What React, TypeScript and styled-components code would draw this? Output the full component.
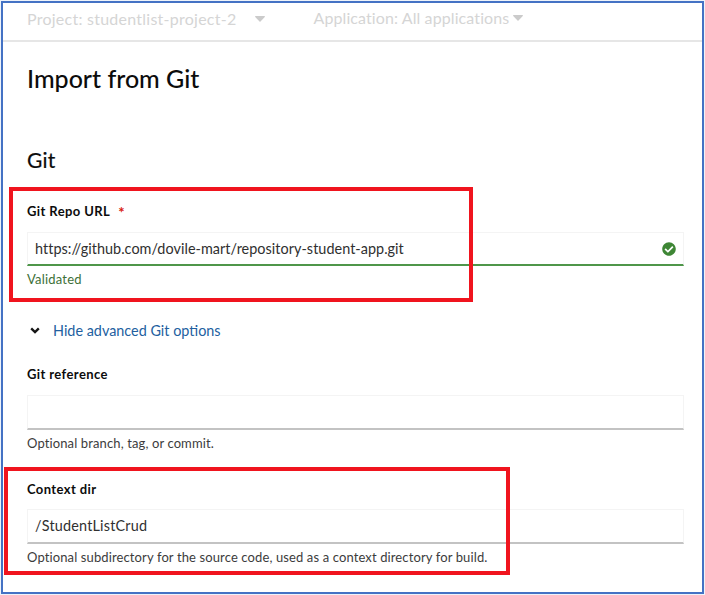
import React from 'react';
import styled, { createGlobalStyle } from 'styled-components';

const GlobalStyle = createGlobalStyle`
  * { box-sizing: border-box; }
  body { margin: 0; background: #fff; font-family: Lato, sans-serif; color: #0c0c0c; }
`;

const Page = styled.div`
  position: relative;
  width: 705px;
  height: 595px;
  padding: 1px;
  overflow: hidden;
  background: #eef3fa;
`;

const Frame = styled.div`
  width: 703px;
  height: 593px;
  border: 2px solid #4472c4;
  background: #fff;
`;

const Toolbar = styled.header`
  display: flex;
  align-items: flex-start;
  height: 39px;
  padding: 5px 24px 0;
  border-bottom: 2px solid #e6e6e6;
`;

const Selector = styled.div<{ $spacing: number; $gap: number; $height: number }>`
  display: flex;
  align-items: center;
  gap: ${(p) => p.$gap}px;
  height: ${(p) => p.$height}px;
  color: #d5d5d5;
  font-size: 16px;
  line-height: ${(p) => p.$height}px;
  letter-spacing: ${(p) => p.$spacing}px;
  white-space: nowrap;

  & + & { margin-left: 48px; }
`;

const Caret = styled.svg`
  display: block;
  width: 10px;
  height: 6px;
  fill: #cbcbcb;
`;

const Content = styled.main`
  display: flex;
  flex-direction: column;
  width: 681px;
  padding-left: 24px;
`;

const Title = styled.h1`
  margin: 19px 0 0;
  font-size: 25px;
  font-weight: 500;
  line-height: 34px;
`;

const SectionTitle = styled.h2`
  margin: 51px 0 28px;
  font-size: 21px;
  font-weight: 400;
  line-height: 28px;
  letter-spacing: 0.2px;
  -webkit-text-stroke: 0.2px #0c0c0c;
`;

const Field = styled.div<{ $top?: number }>`
  display: flex;
  flex-direction: column;
  margin-top: ${(p) => p.$top ?? 0}px;
`;

const Label = styled.label<{ $gap?: number }>`
  display: flex;
  height: 18px;
  margin-bottom: ${(p) => p.$gap ?? 12}px;
  font-size: 13px;
  font-weight: 700;
  line-height: 18px;
  letter-spacing: 0.4px;
`;

const Required = styled.span`
  margin-left: 8px;
  color: #d8200f;
  font-size: 15px;
  line-height: 20px;
`;

const InputBox = styled.div<{ $valid?: boolean }>`
  display: flex;
  align-items: center;
  justify-content: space-between;
  height: ${(p) => (p.$valid ? 34 : 35)}px;
  padding: 0 7px 0 7px;
  border: 1px solid #f4f4f4;
  border-bottom: 2px solid ${(p) => (p.$valid ? '#4f964a' : '#c3c3c3')};
`;

const Value = styled.span<{ $spacing: number }>`
  color: #303030;
  font-size: 14.4px;
  line-height: 20px;
  letter-spacing: ${(p) => p.$spacing}px;
`;

const Help = styled.div<{ $valid?: boolean; $top: number }>`
  margin-top: ${(p) => p.$top}px;
  color: ${(p) => (p.$valid ? '#3d7038' : '#3c3c3c')};
  font-size: 13px;
  line-height: 18px;
  letter-spacing: ${(p) => (p.$valid ? 0.2 : 0.12)}px;
  white-space: nowrap;
`;

const Toggle = styled.button`
  display: flex;
  align-items: center;
  align-self: flex-start;
  gap: 13px;
  height: 20px;
  margin-top: 33px;
  padding: 0 0 0 3px;
  border: 0;
  background: none;
  color: #235f9f;
  font: 14.4px/20px Lato, sans-serif;
`;

const ChevronIcon = styled.svg`
  display: block;
  width: 10px;
  height: 7px;
  margin-bottom: 1px;
`;

const Highlight = styled.div<{ $x: number; $y: number; $w: number; $h: number }>`
  position: absolute;
  left: ${(p) => p.$x}px;
  top: ${(p) => p.$y}px;
  width: ${(p) => p.$w}px;
  height: ${(p) => p.$h}px;
  border: 4px solid #f0141e;
  pointer-events: none;
`;

const CaretDown = () => (
  <Caret viewBox="0 0 10 6"><path d="M.6 0h8.8c.5 0 .7.6.4.9L5.5 5.6a.7.7 0 0 1-1 0L.2.9C-.1.6.1 0 .6 0z" /></Caret>
);

const CheckCircle = () => (
  <svg width="14" height="14" viewBox="0 0 512 512" fill="#3e8635">
    <path d="M504 256c0 136.967-111.033 248-248 248S8 392.967 8 256 119.033 8 256 8s248 111.033 248 248zM227.314 387.314l184-184c6.248-6.248 6.248-16.379 0-22.627l-22.627-22.627c-6.248-6.249-16.379-6.249-22.628 0L216 308.118l-70.059-70.059c-6.248-6.248-16.379-6.248-22.628 0l-22.627 22.627c-6.248 6.248-6.248 16.379 0 22.627l104 104c6.249 6.249 16.379 6.249 22.628.001z" />
  </svg>
);

const Chevron = () => (
  <ChevronIcon viewBox="0 0 10 7" fill="none" stroke="#151515" strokeWidth="2.4">
    <path d="M1.2 1.4L5 5l3.8-3.6" />
  </ChevronIcon>
);

export default function App() {
  return (
    <Page>
      <GlobalStyle />
      <Frame>
        <Toolbar>
          <Selector $spacing={0.25} $gap={19} $height={22}>Project: studentlist-project-2<CaretDown /></Selector>
          <Selector $spacing={0.1} $gap={4} $height={20}>Application: All applications<CaretDown /></Selector>
        </Toolbar>
        <Content>
          <Title>Import from Git</Title>
          <SectionTitle>Git</SectionTitle>
          <Field>
            <Label>Git Repo URL<Required>*</Required></Label>
            <InputBox $valid>
              <Value $spacing={0.045}>https://github.com/dovile-mart/repository-student-app.git</Value>
              <CheckCircle />
            </InputBox>
            <Help $valid $top={4}>Validated</Help>
          </Field>
          <Toggle><Chevron />Hide advanced Git options</Toggle>
          <Field $top={24}>
            <Label>Git reference</Label>
            <InputBox />
            <Help $top={4}>Optional branch, tag, or commit.</Help>
          </Field>
          <Field $top={28}>
            <Label $gap={11}>Context dir</Label>
            <InputBox><Value $spacing={0.2}>/StudentListCrud</Value></InputBox>
            <Help $top={4}>Optional subdirectory for the source code, used as a context directory for build.</Help>
          </Field>
        </Content>
      </Frame>
      <Highlight $x={9} $y={187} $w={464} $h={115} />
      <Highlight $x={4} $y={467} $w={506} $h={108} />
    </Page>
  );
}
